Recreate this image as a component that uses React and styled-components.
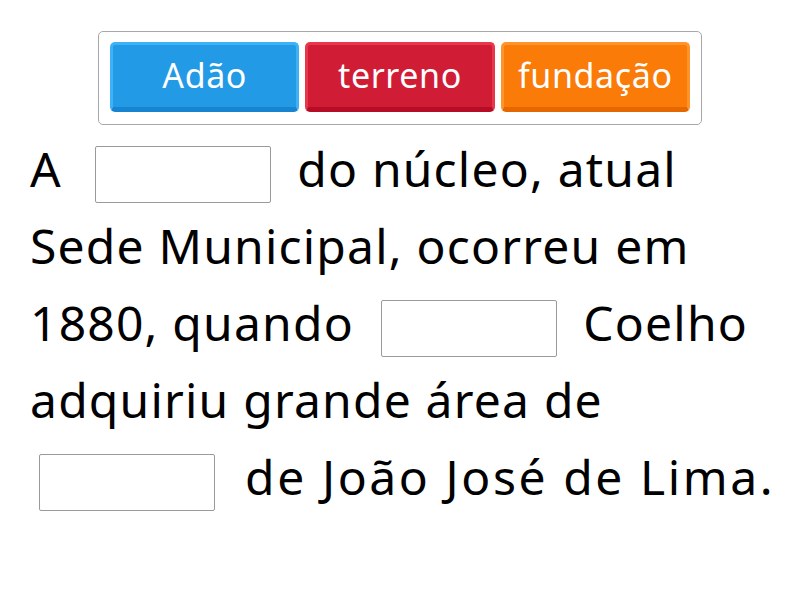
import styled, { createGlobalStyle } from 'styled-components';

const GlobalStyle = createGlobalStyle`
  html, body {
    margin: 0;
    padding: 0;
    background: #fff;
  }
  body {
    font-family: "Noto Sans", Lato, sans-serif;
  }
`;

const Page = styled.div`
  width: 800px;
  height: 600px;
  box-sizing: border-box;
  padding: 31px 0 0 30px;
  overflow: hidden;
`;

const Tray = styled.div`
  display: flex;
  gap: 6px;
  width: 604px;
  box-sizing: border-box;
  margin: 0 0 0 68px;
  padding: 10px 11px 12px 11px;
  border: 1px solid #a8a8a8;
  border-radius: 5px;
  background: #fff;
`;

const colors = {
  blue: { face: '#229ae6', edge: '#3db2f6', bottom: '#1784d2' },
  red: { face: '#d11c35', edge: '#e8364b', bottom: '#b60c25' },
  orange: { face: '#fa7b08', edge: '#ff952a', bottom: '#e56700' },
};

const Chip = styled.div`
  flex: 1;
  height: 70px;
  display: flex;
  align-items: center;
  justify-content: center;
  box-sizing: border-box;
  border-radius: 5px;
  border: 3px solid ${p => colors[p.$c].edge};
  border-bottom: 5px solid ${p => colors[p.$c].bottom};
  background: ${p => colors[p.$c].face};
  color: #fff;
  font-size: 34px;
  letter-spacing: 0.6px;
  padding-bottom: 2px;
`;

const Passage = styled.div`
  margin: 5px 0 0 0;
  font-size: 48px;
  line-height: 77px;
  color: #000;
  white-space: nowrap;
`;

const Line = styled.div`
  letter-spacing: ${p => p.$ls ?? 1.2}px;
`;

const Blank = styled.span`
  display: inline-block;
  width: 176px;
  height: 57px;
  box-sizing: border-box;
  margin: 0 ${p => p.$r ?? 13}px 0 ${p => p.$l ?? 13}px;
  border: 1px solid #9a9a9a;
  border-radius: 2px;
  background: #fff;
  vertical-align: middle;
`;

export default function App() {
  return (
    <>
      <GlobalStyle />
      <Page>
        <Tray>
          <Chip $c="blue">Adão</Chip>
          <Chip $c="red">terreno</Chip>
          <Chip $c="orange">fundação</Chip>
        </Tray>
        <Passage>
          <Line>A <Blank $l={19} /> do núcleo, atual</Line>
          <Line>Sede Municipal, ocorreu em</Line>
          <Line>1880, quando <Blank /> Coelho</Line>
          <Line>adquiriu grande área de</Line>
          <Line $ls={2.6}><Blank $l={9} $r={15} /> de João José de Lima.</Line>
        </Passage>
      </Page>
    </>
  );
}
